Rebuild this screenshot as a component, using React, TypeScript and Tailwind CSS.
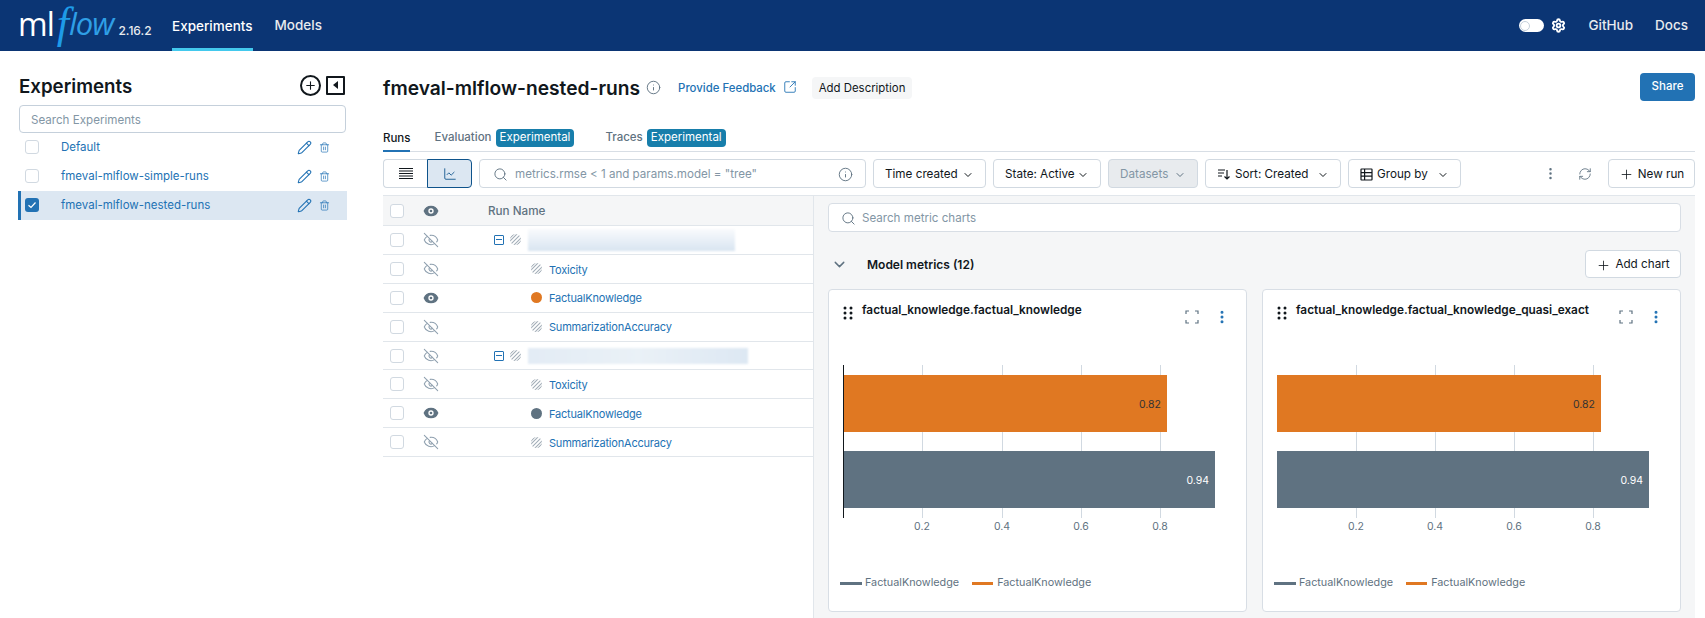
import React from "react";
import {
  ChartLine,
  ChevronDown,
  EllipsisVertical,
  Eye,
  EyeOff,
  Info,
  Pencil,
  Plus,
  RefreshCw,
  Search,
  Settings,
  SquareArrowOutUpRight,
  Trash2,
} from "lucide-react";

const FONT = "font-['Inter','Liberation_Sans',sans-serif]";

const Checkbox = ({ checked = false }: { checked?: boolean }) =>
  checked ? (
    <span className="block w-[14px] h-[14px] rounded-[3px] bg-[#2272B4] flex items-center justify-center shrink-0">
      <svg width="10" height="10" viewBox="0 0 10 10" fill="none" stroke="white" strokeWidth="1.2">
        <path d="M1.5 5.2 L4 7.5 L8.5 2.5" />
      </svg>
    </span>
  ) : (
    <span className="block w-[14px] h-[14px] rounded-[3px] bg-white border border-[#D1D9E1] shrink-0" />
  );

// grey striped dot for runs hidden from the chart
const Hatched = () => (
  <svg width="11" height="11" viewBox="0 0 11 11" className="shrink-0">
    <defs>
      <clipPath id="dot">
        <circle cx="5.5" cy="5.5" r="5.5" />
      </clipPath>
    </defs>
    <g clipPath="url(#dot)" stroke="#A3AEB8" strokeWidth="1.1">
      <path d="M-2 3 L3 -2 M-2 6 L6 -2 M-2 9 L9 -2 M0 11 L11 0 M2 13 L13 2 M5 13 L13 5 M8 13 L13 8" />
    </g>
  </svg>
);

const Select = ({
  label,
  width,
  icon,
  disabled = false,
}: {
  label: string;
  width: string;
  icon?: React.ReactNode;
  disabled?: boolean;
}) => (
  <button
    className={`${width} h-[29px] shrink-0 flex items-center justify-between pl-[11px] pr-[11px] pt-[2px] rounded-[4px] border border-[#D1D9E1] text-[11.7px] whitespace-nowrap ${
      disabled ? "bg-[#E8EBEE] text-[#8396A5]" : "bg-white text-[#11171C]"
    }`}
  >
    <span className="flex items-center gap-[4px]">
      {icon}
      {label}
    </span>
    <ChevronDown size={12} strokeWidth={2} className={disabled ? "text-[#5F7281]" : "text-[#11171C]"} />
  </button>
);

const runs = [
  { name: "", level: 0, blur: "w-[207px] h-[22px] bg-gradient-to-b from-[#F9FBFD] to-[#D8E5F1]" },
  { name: "Toxicity", level: 1 },
  { name: "FactualKnowledge", level: 1, color: "bg-[#E07822]" },
  { name: "SummarizationAccuracy", level: 1 },
  { name: "", level: 0, blur: "w-[220px] h-[16px] bg-gradient-to-r from-[#E3ECF5] via-[#EAF1F7] to-[#DDE8F3]" },
  { name: "Toxicity", level: 1 },
  { name: "FactualKnowledge", level: 1, color: "bg-[#5F7281]" },
  { name: "SummarizationAccuracy", level: 1 },
];

const RunRow = ({ run }: { run: (typeof runs)[number] }) => (
  <div className="h-[28.9px] flex items-center border-b border-[#E1E6EB] bg-white">
    <span className="ml-[7px] w-[33px]">
      <Checkbox />
    </span>
    <span className="w-[71px]">
      {run.color ? (
        <Eye size={16} className="text-[#5F7281] fill-[#5F7281] stroke-[#5F7281] [&>circle]:stroke-white" strokeWidth={2} />
      ) : (
        <EyeOff size={16} className="text-[#8FA0AF]" strokeWidth={1.6} />
      )}
    </span>
    {run.level === 0 ? (
      <span className="flex items-center">
        <span className="w-[10px] h-[10px] border border-[#2272B4] rounded-[1px] flex items-center justify-center">
          <span className="w-[6px] h-[1px] bg-[#2272B4]" />
        </span>
        <span className="ml-[6px]">
          <Hatched />
        </span>
        <span className={`${run.blur} ml-[7px] blur-[1px]`} />
      </span>
    ) : (
      <span className="flex items-center ml-[37px]">
        {run.color ? <span className={`w-[11px] h-[11px] rounded-full ${run.color}`} /> : <Hatched />}
        <span className="ml-[7px] pt-[2px] text-[11px] tracking-[-0.2px] text-[#2272B4]">{run.name}</span>
      </span>
    )}
  </div>
);

const Chart = ({ ticks, axis = false }: { ticks: number[]; axis?: boolean }) => (
  <svg width="417" height="180" viewBox="0 0 417 180" className="block">
    {ticks.map((x) => (
      <line key={x} x1={x + 0.5} x2={x + 0.5} y1="5" y2="158" stroke="#D1D9E1" />
    ))}
    <rect x="14" y="15" width="324" height="57" fill="#E07822" />
    <rect x="14" y="91" width="372" height="57" fill="#5F7281" />
    {axis && <line x1="14.5" x2="14.5" y1="5" y2="158" stroke="#11171C" />}
    <text x="332" y="48" textAnchor="end" fontSize="10.5" fill="#333">
      0.82
    </text>
    <text x="380" y="124" textAnchor="end" fontSize="10.5" fill="#fff">
      0.94
    </text>
    {ticks.map((x, i) => (
      <text key={x} x={x} y="170" textAnchor="middle" fontSize="10.5" fill="#5F7281">
        {(0.2 * (i + 1)).toFixed(1)}
      </text>
    ))}
  </svg>
);

const ChartCard = ({ title, ticks, axis }: { title: string; ticks: number[]; axis?: boolean }) => (
  <div className="relative h-[323px] bg-white rounded-[4px] border border-[#D8DEE5]">
    <div className="h-[70px] flex items-start pl-[14px] pt-[11px]">
      <svg width="10" height="14" viewBox="0 0 10 14" fill="#11171C" className="mt-[5px] shrink-0">
        <circle cx="2" cy="2" r="1.5" />
        <circle cx="8" cy="2" r="1.5" />
        <circle cx="2" cy="7" r="1.5" />
        <circle cx="8" cy="7" r="1.5" />
        <circle cx="2" cy="12" r="1.5" />
        <circle cx="8" cy="12" r="1.5" />
      </svg>
      <span className="ml-[9px] text-[11.8px] font-semibold text-[#11171C] leading-[18px]">{title}</span>
      <span className="ml-auto flex items-center gap-[15px] mr-[16px] mt-[8px]">
        <svg width="14" height="14" viewBox="0 0 14 14" fill="none" stroke="#5F7281" strokeWidth="1.2">
          <path d="M1 4V1H4M10 1H13V4M1 10V13H4M13 10V13H10" />
        </svg>
        <EllipsisVertical size={16} strokeWidth={2.5} className="text-[#2272B4]" />
      </span>
    </div>
    <Chart ticks={ticks} axis={axis} />
    <div className="mt-[35px] pl-[11px] flex items-center text-[10.8px] text-[#5F7281]">
      <span className="w-[22px] h-[3px] bg-[#5F7281]" />
      <span className="ml-[3px]">FactualKnowledge</span>
      <span className="ml-[13px] w-[21px] h-[3px] bg-[#E07822]" />
      <span className="ml-[4px]">FactualKnowledge</span>
    </div>
  </div>
);

const App = () => {
  return (
    <div className={`w-[1705px] h-[618px] overflow-hidden bg-white flex flex-col ${FONT} text-[#11171C]`}>
      {/* Top bar */}
      <header className="h-[51px] shrink-0 bg-[#0B3574] flex items-stretch text-white">
        <div className="ml-[18px] w-[154px] flex items-center">
          <span className="font-['Open_Sans',sans-serif] text-[32px] leading-none font-medium tracking-[-1px] -mt-[4px]">ml</span>
          <span className="font-['Liberation_Serif',serif] text-[44px] leading-none italic text-[#1E9BE8] -mt-[4px] ml-[3px]">f</span>
          <span className="font-['Open_Sans',sans-serif] text-[31px] leading-none font-medium italic text-[#2F9FE6] -mt-[4px] tracking-[-1px]">low</span>
          <span className="ml-[5px] mt-[10px] text-[12px] font-medium text-[#E8EBEE]">2.16.2</span>
        </div>
        <nav className="flex items-stretch gap-[22px] text-[13.5px] font-medium">
          <a className="flex items-center border-b-[3px] border-[#43C9ED] pt-[4px]">Experiments</a>
          <a className="flex items-center text-[#E8EBEE]">Models</a>
        </nav>
        <div className="ml-auto flex items-center mr-[17px] text-[13.5px] font-medium text-[#E8EBEE]">
          <span className="w-[25px] h-[13px] rounded-full bg-white flex items-center pl-[1px]">
            <span className="w-[10px] h-[10px] rounded-full bg-white border border-[#C5D0DB]" />
          </span>
          <Settings size={15} strokeWidth={3} className="ml-[7px] text-white" />
          <span className="ml-[22px]">GitHub</span>
          <span className="ml-[22px]">Docs</span>
        </div>
      </header>

      <div className="flex flex-1 min-h-0">
        {/* Experiment list */}
        <aside className="w-[329px] ml-[18px] pt-[22px] shrink-0">
          <div className="h-[24px] flex items-center justify-between pl-[1px] pr-[2px]">
            <h2 className="text-[18.7px] font-semibold pt-[5px]">Experiments</h2>
            <div className="flex items-center gap-[5px]">
              <span className="w-[21px] h-[21px] rounded-full border-2 border-[#11171C] flex items-center justify-center">
                <Plus size={13} strokeWidth={2} />
              </span>
              <span className="w-[19px] h-[19px] border-2 border-[#11171C] rounded-[1px] flex items-center justify-center">
                <span className="w-0 h-0 border-y-[4px] border-y-transparent border-r-[5px] border-r-[#11171C]" />
              </span>
            </div>
          </div>
          <div className="mt-[8px] ml-[1px] mr-[1px] h-[28px] rounded-[4px] border border-[#C5D0DB] flex items-center pl-[11px] pt-[3px] text-[11.6px] text-[#8396A5]">
            Search Experiments
          </div>
          {["Default", "fmeval-mlflow-simple-runs", "fmeval-mlflow-nested-runs"].map((name, i) => (
            <div
              key={name}
              className={`h-[29px] flex items-center border-l-[3px] pl-[4px] ${
                i === 2 ? "border-[#2272B4] bg-[#DCE7F2]" : "border-transparent"
              }`}
            >
              <span className="-mt-[2px]">
                <Checkbox checked={i === 2} />
              </span>
              <span className="ml-[22px] text-[11.5px] text-[#2272B4]">{name}</span>
              <span className="ml-auto flex items-center gap-[7px] mr-[17px] text-[#2272B4]">
                <Pencil size={15} strokeWidth={1.7} />
                <Trash2 size={11} strokeWidth={1.5} />
              </span>
            </div>
          ))}
        </aside>

        {/* Main content */}
        <main className="ml-[36px] w-[1312px] pt-[22px] flex flex-col min-h-0">
          <div className="h-[28px] shrink-0 flex items-center">
            <h1 className="text-[19.2px] font-semibold pt-[2px]">fmeval-mlflow-nested-runs</h1>
            <Info size={15} strokeWidth={1.5} className="ml-[6px] text-[#5F7281]" />
            <span className="ml-[17px] pt-[4px] text-[11.4px] font-medium text-[#2272B4]">Provide Feedback</span>
            <SquareArrowOutUpRight size={14} strokeWidth={1.5} className="ml-[7px] text-[#2272B4]" />
            <span className="ml-[15px] mt-[2px] h-[22px] px-[7px] pt-[1px] flex items-center rounded-[4px] bg-[#F5F6F7] text-[11.4px]">
              Add Description
            </span>
            <button className="ml-auto w-[55px] h-[28px] rounded-[4px] bg-[#2272B4] text-white text-[11.5px] font-medium">
              Share
            </button>
          </div>

          {/* Tabs */}
          <div className="mt-[24px] h-[27px] shrink-0 flex items-stretch border-b border-[#D8DEE5] text-[11.5px] font-medium">
            <span className="flex items-center pt-[2px] border-b-[2px] border-[#2272B4] -mb-[1px]">Runs</span>
            <span className="ml-[24px] flex items-center text-[#5F7281]">
              Evaluation
              <span className="ml-[4px] h-[18px] px-[4px] rounded-[4px] bg-[#177EAB] text-white font-normal flex items-center">
                Experimental
              </span>
            </span>
            <span className="ml-[31px] flex items-center text-[#5F7281]">
              Traces
              <span className="ml-[4px] h-[18px] px-[4px] rounded-[4px] bg-[#177EAB] text-white font-normal flex items-center">
                Experimental
              </span>
            </span>
          </div>

          {/* Toolbar */}
          <div className="mt-[7px] pb-[7px] shrink-0 flex items-center gap-[7px] border-b border-[#E1E6EB]">
            <div className="flex h-[29px] w-[89px] shrink-0">
              <span className="flex-1 flex items-center justify-center border border-r-0 border-[#D1D9E1] rounded-l-[4px]">
                <svg width="14" height="11" viewBox="0 0 14 11" stroke="#11171C" strokeWidth="1.1">
                  <path d="M0 .5H14M0 3H14M0 5.5H14M0 8H14M0 10.5H14" />
                </svg>
              </span>
              <span className="flex-1 flex items-center justify-center border border-[#0E538B] rounded-r-[4px] bg-[#DCE7F2]">
                <ChartLine size={14} strokeWidth={1.5} className="text-[#0E538B]" />
              </span>
            </div>
            <div className="w-[387px] h-[29px] shrink-0 flex items-center rounded-[4px] border border-[#D1D9E1] pl-[13px] pr-[12px] pt-[2px] text-[11.6px] text-[#8396A5]">
              <Search size={15} strokeWidth={1.5} className="text-[#5F7281]" />
              <span className="ml-[7px]">metrics.rmse &lt; 1 and params.model = "tree"</span>
              <Info size={15} strokeWidth={1.5} className="ml-auto text-[#5F7281]" />
            </div>
            <Select label="Time created" width="w-[113px]" />
            <Select label="State: Active" width="w-[108px]" />
            <Select label="Datasets" width="w-[90px]" disabled />
            <Select
              label="Sort: Created"
              width="w-[136px]"
              icon={
                <svg width="14" height="14" viewBox="0 0 14 14" fill="none" stroke="#11171C" strokeWidth="1.2">
                  <path d="M1 3H8M1 6H7M1 9H5M10 3V12M7.5 9.5L10 12L12.5 9.5" />
                </svg>
              }
            />
            <Select
              label="Group by"
              width="w-[113px]"
              icon={
                <svg width="13" height="13" viewBox="0 0 13 13" fill="none" stroke="#11171C" strokeWidth="1.2">
                  <rect x="1" y="1" width="11" height="11" rx="0.5" />
                  <path d="M1 4.6H12M1 8.2H12M4.6 1V12" />
                </svg>
              }
            />
            <span className="ml-auto flex items-center gap-[20px] mr-[9px]">
              <EllipsisVertical size={15} className="text-[#5F7281]" />
              <RefreshCw size={14} strokeWidth={1.5} className="text-[#5F7281]" />
            </span>
            <button className="w-[87px] h-[29px] shrink-0 rounded-[4px] border border-[#D1D9E1] flex items-center justify-center gap-[4px] pt-[2px] text-[11.7px]">
              <Plus size={15} strokeWidth={1.3} />
              New run
            </button>
          </div>

          <div className="flex flex-1 min-h-0">
            {/* Runs table */}
            <div className="w-[430px] shrink-0">
              <div className="h-[30px] flex items-center border-b border-[#E1E6EB] bg-[#F5F6F7] text-[11.7px] font-medium text-[#5F7281]">
                <span className="ml-[7px] w-[33px]">
                  <Checkbox />
                </span>
                <span className="w-[65px]">
                  <Eye size={16} strokeWidth={2} className="text-[#5F7281] fill-[#5F7281] [&>circle]:stroke-white" />
                </span>
                <span className="pt-[2px]">Run Name</span>
              </div>
              {runs.map((run, i) => (
                <RunRow key={i} run={run} />
              ))}
            </div>

            {/* Charts */}
            <div className="flex-1 min-w-0 bg-[#F5F6F7] border-l border-[#E1E6EB] pl-[14px] pr-[14px] pt-[7px]">
              <div className="h-[29px] flex items-center rounded-[4px] border border-[#D8DEE5] bg-white pl-[12px] pt-[2px] text-[11.6px] text-[#8396A5]">
                <Search size={15} strokeWidth={1.5} className="text-[#5F7281]" />
                <span className="ml-[6px]">Search metric charts</span>
              </div>
              <div className="mt-[18px] h-[28px] flex items-center">
                <ChevronDown size={17} strokeWidth={2} className="ml-[3px] text-[#5F7281]" />
                <span className="ml-[19px] pt-[2px] text-[12px] font-semibold">Model metrics (12)</span>
                <button className="ml-auto w-[96px] h-[28px] rounded-[4px] border border-[#D1D9E1] bg-white flex items-center justify-center gap-[4px] pt-[2px] text-[11.7px]">
                  <Plus size={15} strokeWidth={1.3} />
                  Add chart
                </button>
              </div>
              <div className="mt-[11px] grid grid-cols-2 gap-[15px]">
                <ChartCard title="factual_knowledge.factual_knowledge" ticks={[93, 173, 252, 331]} axis />
                <ChartCard title="factual_knowledge.factual_knowledge_quasi_exact" ticks={[93, 172, 251, 330]} />
              </div>
            </div>
          </div>
        </main>
      </div>
    </div>
  );
};

export default App;
